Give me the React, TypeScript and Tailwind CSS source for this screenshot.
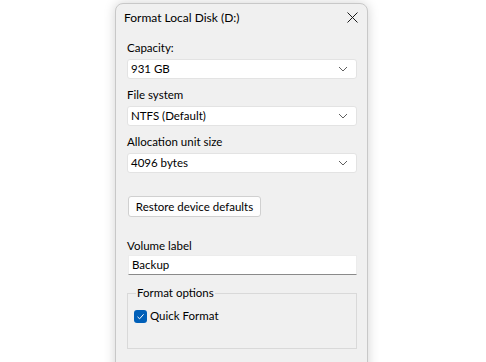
import React from "react";

function Chevron() {
  return (
    <svg width="10" height="6" viewBox="0 0 10 6" className="shrink-0">
      <path d="M1 1 L5 5 L9 1" fill="none" stroke="#5f5f5f" strokeWidth="1" />
    </svg>
  );
}

function Select({ value }: { value: string }) {
  return (
    <div className="h-[20px] w-[230px] bg-white border border-[#e3e3e3] rounded-[3px] flex items-center pl-[3px] pr-[8px] justify-between">
      <span className="text-[11.5px] leading-[16px] text-black">{value}</span>
      <Chevron />
    </div>
  );
}

function Label({ children }: { children: React.ReactNode }) {
  return <div className="text-[11.5px] leading-[16px] text-black">{children}</div>;
}

export default function App() {
  return (
    <div
      className="w-[486px] h-[362px] bg-white overflow-hidden"
      style={{ fontFamily: 'Lato, "Noto Sans", sans-serif' }}
    >
      <div className="ml-[115px] mt-[3px] w-[253px] h-[420px] bg-[#f0f0f0] border border-[#c8c8c8] rounded-t-[8px] shadow-[0_0_12px_rgba(0,0,0,0.18)]">
        <div className="h-[27px] flex items-center justify-between pl-[8px] pr-[9px]">
          <span className="text-[12px] leading-[16px] text-black">Format Local Disk (D:)</span>
          <svg width="11" height="11" viewBox="0 0 11 11">
            <path d="M0.5 0.5 L10.5 10.5 M10.5 0.5 L0.5 10.5" stroke="#1a1a1a" strokeWidth="1" />
          </svg>
        </div>
        <div className="pl-[11px] pt-[9px] flex flex-col">
          <Label>Capacity:</Label>
          <div className="mt-[3px]">
            <Select value="931 GB" />
          </div>
          <div className="mt-[8px]">
            <Label>File system</Label>
          </div>
          <div className="mt-[3px]">
            <Select value="NTFS (Default)" />
          </div>
          <div className="mt-[8px]">
            <Label>Allocation unit size</Label>
          </div>
          <div className="mt-[3px]">
            <Select value="4096 bytes" />
          </div>
          <div className="mt-[23px]">
            <button className="h-[21px] w-[133px] ml-[1px] bg-[#fdfdfd] border border-[#d0d0d0] rounded-[3px] text-[11.5px] leading-[16px] text-black flex items-center justify-center">
              Restore device defaults
            </button>
          </div>
          <div className="mt-[21px]">
            <Label>Volume label</Label>
          </div>
          <div className="mt-[1px] ml-[1px] h-[20px] w-[229px] bg-white border border-[#ececec] border-b-[#8a8a8a] flex items-center pl-[3px]">
            <span className="text-[11.5px] leading-[16px] text-black">Backup</span>
          </div>
          <fieldset className="mt-[10px] w-[230px] h-[64px] border border-[#d9d9d9] px-[6px]">
            <legend className="ml-[2px] px-[1px] text-[11.5px] leading-[16px] text-black">Format options</legend>
            <div className="mt-[7px] flex items-center gap-[3px]">
              <div className="w-[13px] h-[13px] bg-[#005fb8] rounded-[3px] flex items-center justify-center">
                <svg width="9" height="9" viewBox="0 0 9 9">
                  <path d="M1.5 4.8 L3.6 6.8 L7.6 2.3" fill="none" stroke="white" strokeWidth="1" />
                </svg>
              </div>
              <span className="text-[11.5px] leading-[16px] text-black">Quick Format</span>
            </div>
          </fieldset>
        </div>
      </div>
    </div>
  );
}
